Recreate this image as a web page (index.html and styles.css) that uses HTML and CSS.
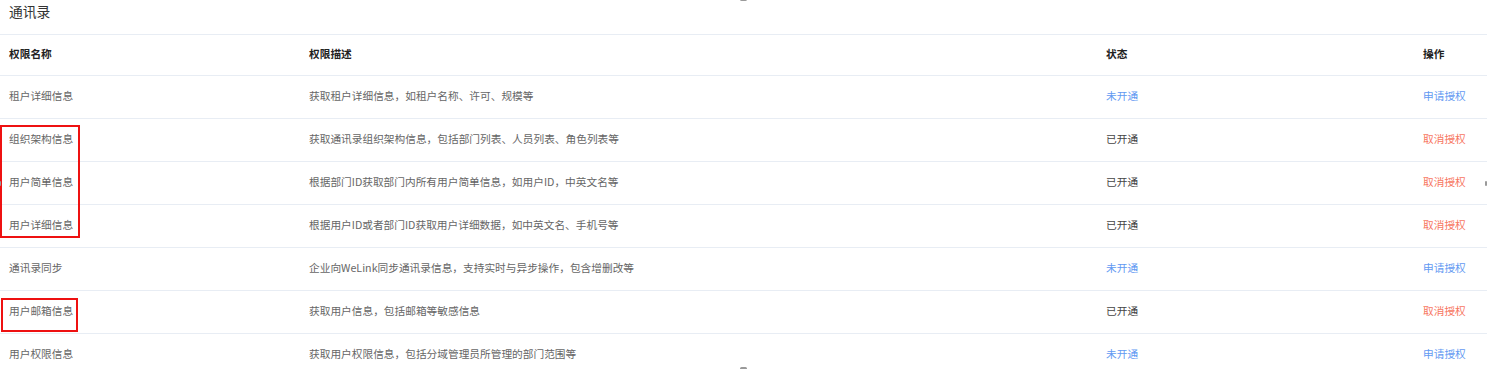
FILE: index.html
```html
<!DOCTYPE html>
<html lang="zh-CN">
<head>
<meta charset="utf-8">
<title>通讯录</title>
<link rel="stylesheet" href="styles.css">
</head>
<body>
<div class="page">
  <div class="title">通讯录</div>
  <div class="table">
    <div class="row head">
      <div class="cell">权限名称</div>
      <div class="cell">权限描述</div>
      <div class="cell">状态</div>
      <div class="cell">操作</div>
    </div>
    <div class="row">
      <div class="cell">租户详细信息</div>
      <div class="cell">获取租户详细信息，如租户名称、许可、规模等</div>
      <div class="cell off">未开通</div>
      <div class="cell apply">申请授权</div>
    </div>
    <div class="row">
      <div class="cell">组织架构信息</div>
      <div class="cell">获取通讯录组织架构信息，包括部门列表、人员列表、角色列表等</div>
      <div class="cell on">已开通</div>
      <div class="cell cancel">取消授权</div>
    </div>
    <div class="row">
      <div class="cell">用户简单信息</div>
      <div class="cell">根据部门ID获取部门内所有用户简单信息，如用户ID，中英文名等</div>
      <div class="cell on">已开通</div>
      <div class="cell cancel">取消授权</div>
    </div>
    <div class="row">
      <div class="cell">用户详细信息</div>
      <div class="cell">根据用户ID或者部门ID获取用户详细数据，如中英文名、手机号等</div>
      <div class="cell on">已开通</div>
      <div class="cell cancel">取消授权</div>
    </div>
    <div class="row">
      <div class="cell">通讯录同步</div>
      <div class="cell">企业向WeLink同步通讯录信息，支持实时与异步操作，包含增删改等</div>
      <div class="cell off">未开通</div>
      <div class="cell apply">申请授权</div>
    </div>
    <div class="row">
      <div class="cell">用户邮箱信息</div>
      <div class="cell">获取用户信息，包括邮箱等敏感信息</div>
      <div class="cell on">已开通</div>
      <div class="cell cancel">取消授权</div>
    </div>
    <div class="row">
      <div class="cell">用户权限信息</div>
      <div class="cell">获取用户权限信息，包括分域管理员所管理的部门范围等</div>
      <div class="cell off">未开通</div>
      <div class="cell apply">申请授权</div>
    </div>
  </div>
  <div class="mark mark-a"></div>
  <div class="mark mark-b"></div>
  <span class="dot dot-top"></span>
  <span class="dot dot-bottom"></span>
  <span class="dot dot-left"></span>
  <span class="dot dot-right"></span>
</div>
</body>
</html>
```
FILE: styles.css
```css
html, body {
  margin: 0;
  padding: 0;
  background: #ffffff;
}
body {
  font-family: "Noto Sans CJK SC", "Noto Sans", "Liberation Sans", sans-serif;
  color: #555;
  overflow: hidden;
}
.page {
  position: relative;
  width: 1487px;
  height: 369px;
  overflow: hidden;
}
.title {
  height: 34px;
  line-height: 22px;
  padding-left: 9px;
  font-size: 13.8px;
  color: #333;
}
.table {
  border-top: 1px solid #e8edf4;
}
.row {
  display: grid;
  grid-template-columns: 300px 797px 317px 1fr;
  height: 42px;
  align-items: center;
  border-bottom: 1px solid #e8edf4;
  font-size: 10.7px;
}
.row.head {
  height: 40px;
  font-weight: bold;
  color: #222;
}
.cell {
  padding-left: 9px;
  padding-bottom: 2px;
  line-height: 14px;
  white-space: nowrap;
}
.row:not(.head) .cell:first-child,
.row:not(.head) .cell:nth-child(2) {
  color: #666;
}
.on {
  color: #444;
}
.off, .apply {
  color: #639af2;
}
.cancel {
  color: #f7765f;
}
.mark {
  position: absolute;
  border: 2px solid #ee1111;
  box-sizing: border-box;
}
.mark-a {
  left: 0;
  top: 125px;
  width: 80px;
  height: 113px;
}
.mark-b {
  left: 1px;
  top: 298px;
  width: 77px;
  height: 34px;
}
.dot {
  position: absolute;
  background: #9a9a9a;
  border-radius: 2px;
}
.dot-top {
  left: 740px;
  top: -2px;
  width: 7px;
  height: 3px;
}
.dot-bottom {
  left: 740px;
  top: 367px;
  width: 7px;
  height: 3px;
}
.dot-left {
  left: -1px;
  top: 181px;
  width: 2px;
  height: 5px;
}
.dot-right {
  left: 1485px;
  top: 181px;
  width: 2px;
  height: 5px;
}
```
